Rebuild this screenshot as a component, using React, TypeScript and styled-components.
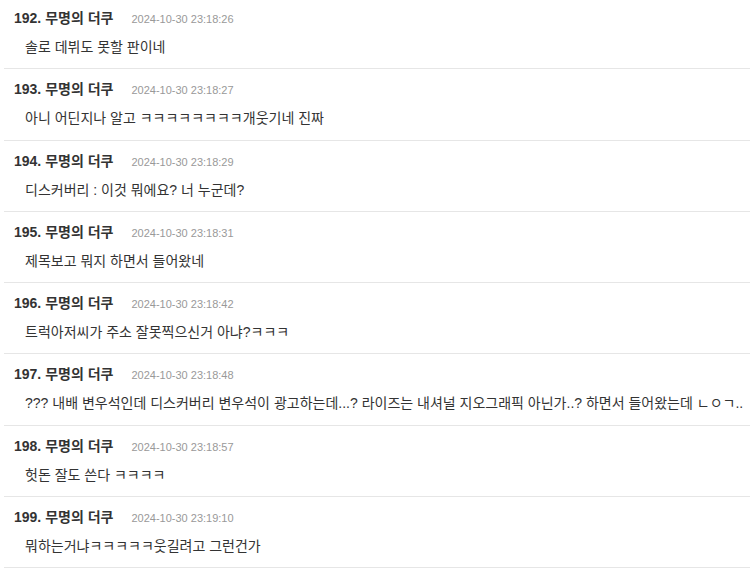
import styled, { createGlobalStyle } from "styled-components";

const GlobalStyle = createGlobalStyle`
  body {
    margin: 0;
    background: #fff;
    font-family: "Liberation Sans", "Noto Sans CJK KR", sans-serif;
  }
`

const CommentList = styled.ul`
  list-style: none;
  margin: -2px 0 0 4px;
  padding: 0;
`

const CommentItem = styled.li`
  padding: 11px 0 12.29px 10px;
  border-bottom: 1px solid #e6e6e6;
`

const Header = styled.div`
  display: flex;
  align-items: baseline;
  gap: 18px;
  height: 18px;
  line-height: 18px;
`

const Author = styled.span`
  font-size: 14px;
  font-weight: 700;
  color: #333;
`

const DateText = styled.span`
  font-size: 11px;
  color: #999;
`

const Body = styled.p`
  margin: 11px 0 0;
  padding-left: 11px;
  height: 18px;
  font-size: 14px;
  line-height: 18px;
  color: #333;
  white-space: nowrap;
`

const comments = [
  { no: 192, date: "2024-10-30 23:18:26", text: "솔로 데뷔도 못할 판이네" },
  { no: 193, date: "2024-10-30 23:18:27", text: "아니 어딘지나 알고 ㅋㅋㅋㅋㅋㅋㅋㅋ개웃기네 진짜" },
  { no: 194, date: "2024-10-30 23:18:29", text: "디스커버리 : 이것 뭐에요? 너 누군데?" },
  { no: 195, date: "2024-10-30 23:18:31", text: "제목보고 뭐지 하면서 들어왔네" },
  { no: 196, date: "2024-10-30 23:18:42", text: "트럭아저씨가 주소 잘못찍으신거 아냐?ㅋㅋㅋ" },
  { no: 197, date: "2024-10-30 23:18:48", text: "??? 내배 변우석인데 디스커버리 변우석이 광고하는데...? 라이즈는 내셔널 지오그래픽 아닌가..? 하면서 들어왔는데 ㄴㅇㄱ.." },
  { no: 198, date: "2024-10-30 23:18:57", text: "헛돈 잘도 쓴다 ㅋㅋㅋㅋ" },
  { no: 199, date: "2024-10-30 23:19:10", text: "뭐하는거냐ㅋㅋㅋㅋㅋ웃길려고 그런건가" },
]

export default function App() {
  return (
    <>
      <GlobalStyle />
      <CommentList>
        {comments.map((c) => (
          <CommentItem key={c.no}>
            <Header>
              <Author>{c.no}. 무명의 더쿠</Author>
              <DateText>{c.date}</DateText>
            </Header>
            <Body>{c.text}</Body>
          </CommentItem>
        ))}
      </CommentList>
    </>
  )
}
